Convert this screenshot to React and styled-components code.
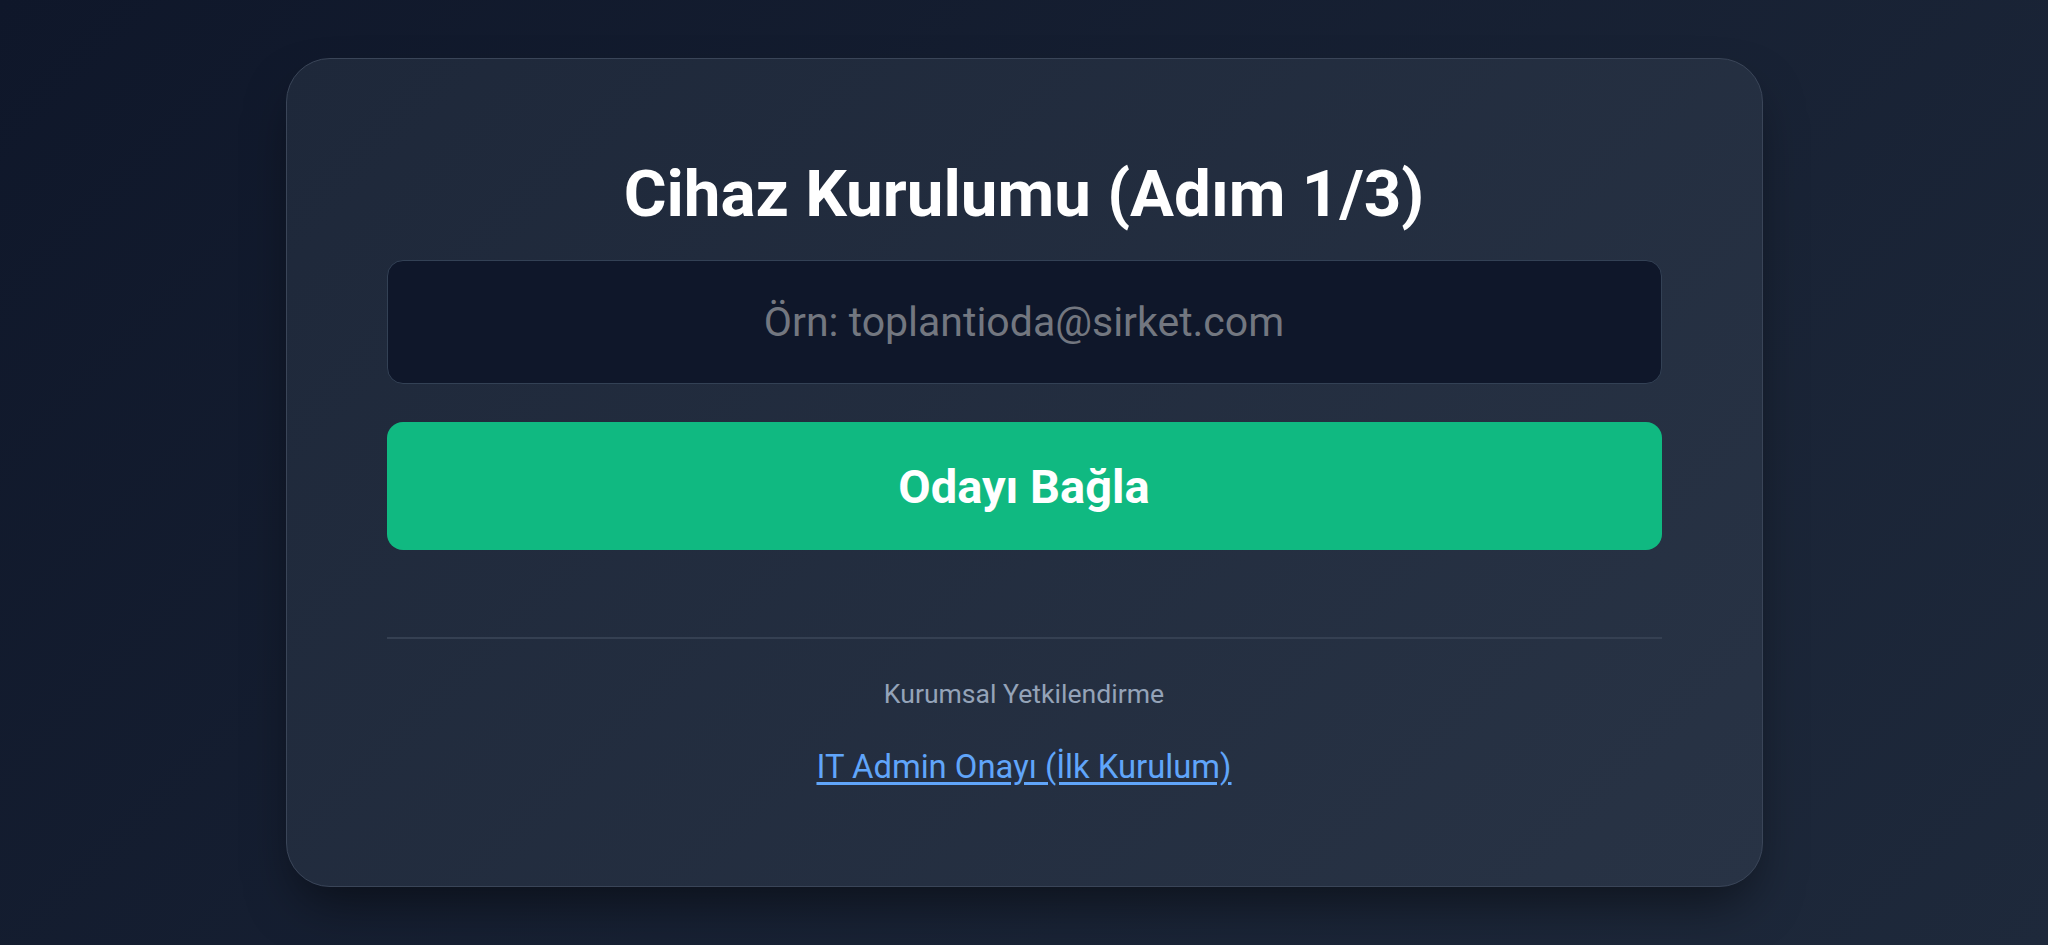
import React from 'react';
import styled, { createGlobalStyle } from 'styled-components';

const GlobalStyle = createGlobalStyle`
  html, body {
    margin: 0;
    padding: 0;
  }
  body {
    font-family: Roboto, 'Noto Sans', sans-serif;
    background: linear-gradient(135deg, #0f172a 0%, #1e293b 100%);
    min-height: 100vh;
  }
`;

const Page = styled.div`
  min-height: 945px;
  display: flex;
  justify-content: center;
  align-items: flex-start;
  padding-top: 58px;
  box-sizing: border-box;
`;

const Card = styled.div`
  width: 1477px;
  box-sizing: border-box;
  padding: 96px 100px 100px;
  border-radius: 44px;
  border: 1px solid #3a4558;
  background: linear-gradient(135deg, #1e283a 0%, #283345 100%);
  box-shadow: 0 25px 50px -12px rgba(0, 0, 0, 0.5);
  display: flex;
  flex-direction: column;
  align-items: stretch;
  text-align: center;
`;

const Title = styled.h1`
  margin: 0 0 27px;
  font-size: 65.5px;
  line-height: 78px;
  font-weight: 700;
  color: #ffffff;
`;

const Input = styled.input`
  height: 124px;
  box-sizing: border-box;
  border-radius: 16px;
  border: 1px solid #334155;
  background: #0f172a;
  color: #ffffff;
  font-family: Roboto, sans-serif;
  font-size: 41px;
  text-align: center;
  outline: none;
  &::placeholder {
    color: #737780;
  }
`;

const Button = styled.button`
  margin-top: 38px;
  height: 128px;
  border: none;
  border-radius: 16px;
  background: #10b981;
  color: #ffffff;
  font-family: Roboto, sans-serif;
  font-size: 47px;
  font-weight: 700;
  cursor: pointer;
`;

const Divider = styled.hr`
  margin: 87px 0 0;
  border: none;
  border-top: 2px solid #354052;
`;

const Caption = styled.div`
  margin-top: 39px;
  font-size: 26.6px;
  line-height: 32px;
  color: #94a3b8;
`;

const AdminLink = styled.a`
  margin-top: 38px;
  align-self: center;
  font-size: 32.8px;
  line-height: 38px;
  color: #60a5fa;
  text-decoration: underline;
  text-underline-offset: 4px;
  cursor: pointer;
`;

const App = () => (
  <>
    <GlobalStyle />
    <Page>
      <Card>
        <Title>Cihaz Kurulumu (Adım 1/3)</Title>
        <Input placeholder="Örn: toplantioda@sirket.com" />
        <Button>Odayı Bağla</Button>
        <Divider />
        <Caption>Kurumsal Yetkilendirme</Caption>
        <AdminLink>IT Admin Onayı (İlk Kurulum)</AdminLink>
      </Card>
    </Page>
  </>
);

export default App;
